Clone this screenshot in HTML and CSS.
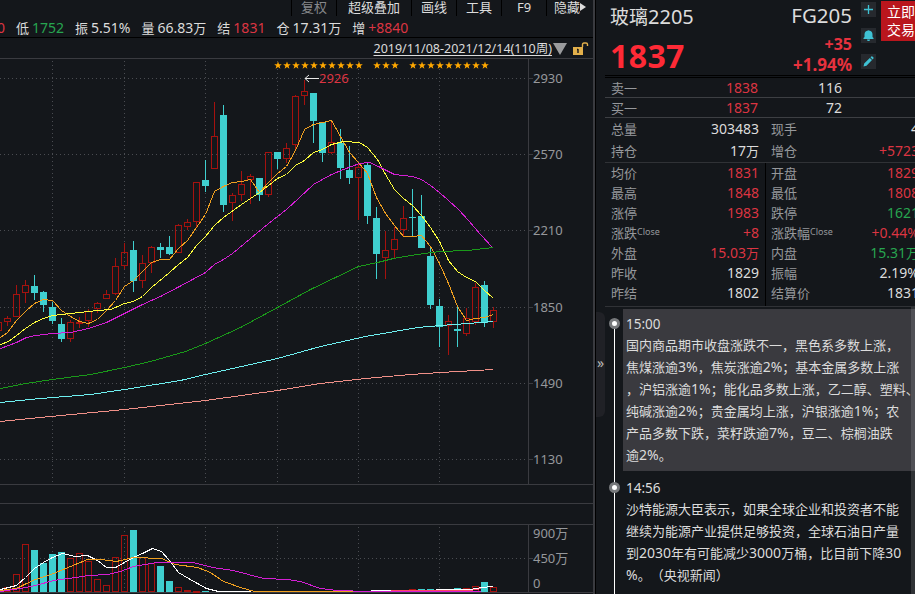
FILE: index.html
```html
<!DOCTYPE html>
<html lang="zh-CN">
<head>
  <meta charset="UTF-8">
  <title>玻璃2205 FG205</title>
  <link rel="stylesheet" href="styles.css">
</head>
<body>
  <div class="app">

    <!-- 左侧：K线区域 -->
    <div class="left">
      <div class="menu">
        <span class="dim w45">复权</span>
        <span class="w75">超级叠加</span>
        <span class="w45">画线</span>
        <span class="w45">工具</span>
        <span class="w45">F9</span>
        <span class="w47">隐藏<i class="arrow"></i></span>
      </div>

      <div class="info">
        <span><b class="red">0</b></span>
        <span>低<b class="green">1752</b></span>
        <span>振<b>5.51%</b></span>
        <span>量<b>66.83</b>万</span>
        <span>结<b class="red">1831</b></span>
        <span>仓<b>17.31</b>万</span>
        <span>增<b class="red">+8840</b></span>
      </div>

      <div class="range">
        <u>2019/11/08-2021/12/14(110周)</u>
        <i class="drop"></i>
        <svg class="lock" width="16" height="14" viewBox="0 0 16 14">
          <rect x="0" y="5" width="10" height="8" fill="#e3b04b"/>
          <path d="M9.5 5V2.5Q9.5 1 11 1H13Q14.5 1 14.5 2.5V4" fill="none" stroke="#e3b04b" stroke-width="1.4"/>
          <path d="M5 7V11M4 7.5H5" stroke="#14171b" stroke-width="1.4"/>
        </svg>
      </div>

      <svg id="chart" class="chart" width="593" height="536" viewBox="0 58 593 536"></svg>
    </div>

    <!-- 右侧：报价与资讯 -->
    <div class="right">
      <div class="gutter"><div class="fold">»</div></div>

      <div class="panel">
        <div class="head">
          <div class="title">
            <div class="name">玻璃<b>2205</b></div>
            <div class="price">1837</div>
          </div>
          <div class="change">
            <div class="code">FG205</div>
            <div class="diff">+35</div>
            <div class="pct">+1.94%</div>
          </div>
          <div class="tools">
            <svg width="15" height="15" viewBox="0 0 15 15"><path d="M7.5 3V12M3 7.5H12" stroke="#3fc1d3" stroke-width="1.3"/></svg>
            <svg width="15" height="15" viewBox="0 0 15 15"><path d="M2.5 11V10L3.5 9V6.5Q3.5 3 7 2.5Q7.5 1.8 8 2.5Q11.5 3 11.5 6.5V9L12.5 10V11ZM6 11.5H9L8.5 13H6.5Z" fill="#3fc1d3"/></svg>
            <svg width="15" height="15" viewBox="0 0 15 15"><path d="M2.5 12.5L3.2 9.5L8.8 3.9L11 6.1L5.5 11.7ZM9.5 3.2L10.3 2.5Q11 2 11.7 2.7L12.3 3.3Q12.9 4 12.3 4.7L11.6 5.4Z" fill="#3fc1d3"/></svg>
          </div>
          <div class="trade">立即<br>交易</div>
        </div>

        <div class="bid"><span>卖一</span><b class="red">1838</b><b>116</b></div>
        <div class="bid"><span>买一</span><b class="red">1837</b><b>72</b></div>

        <div class="totals">
          <div class="row"><span>总量</span><b>303483</b><span>现手</span><b>4</b></div>
          <div class="row"><span>持仓</span><b>17<em>万</em></b><span>增仓</span><b class="red">+5723</b></div>
        </div>

        <div class="quotes">
          <div class="row"><span>均价</span><b class="red">1831</b><span>开盘</span><b class="red">1829</b></div>
          <div class="row"><span>最高</span><b class="red">1848</b><span>最低</span><b class="red">1808</b></div>
          <div class="row"><span>涨停</span><b class="red">1983</b><span>跌停</span><b class="green">1621</b></div>
          <div class="row"><span>涨跌<small>Close</small></span><b class="red">+8</b><span>涨跌幅<small>Close</small></span><b class="red">+0.44%</b></div>
          <div class="row"><span>外盘</span><b class="red">15.03<em>万</em></b><span>内盘</span><b class="green">15.31<em>万</em></b></div>
          <div class="row"><span>昨收</span><b>1829</b><span>振幅</span><b>2.19%</b></div>
          <div class="row"><span>昨结</span><b>1802</b><span>结算价</span><b>1831</b></div>
        </div>

        <div class="news">
          <div class="item active">
            <i class="dot"></i>
            <div class="text">
              <div class="time">15:00</div>
              <p>国内商品期市收盘涨跌不一，黑色系多数上涨，</p>
              <p>焦煤涨逾<b>3%</b>，焦炭涨逾<b>2%</b>；基本金属多数上涨</p>
              <p>，沪铝涨逾<b>1%</b>；能化品多数上涨，乙二醇、塑料、</p>
              <p>纯碱涨逾<b>2%</b>；贵金属均上涨，沪银涨逾<b>1%</b>；农</p>
              <p>产品多数下跌，菜籽跌逾<b>7%</b>，豆二、棕榈油跌</p>
              <p>逾<b>2%</b>。</p>
            </div>
          </div>
          <div class="item">
            <i class="dot"></i>
            <div class="text">
              <div class="time">14:56</div>
              <p>沙特能源大臣表示，如果全球企业和投资者不能</p>
              <p>继续为能源产业提供足够投资，全球石油日产量</p>
              <p>到<b>2030</b>年有可能减少<b>3000</b>万桶，比目前下降<b>30</b></p>
              <p><b>%</b>。（央视新闻）</p>
            </div>
          </div>
          <div class="scroll"></div>
        </div>
      </div>
    </div>

  </div>
  <script src="chart.js"></script>
</body>
</html>
```
FILE: styles.css
```css
* {
  box-sizing: border-box;
}

body {
  margin: 0;
  background: #14171b;
  color: #dcdcdc;
  font-family: "Noto Sans", "Noto Sans CJK SC", sans-serif;
  font-size: 13px;
  text-spacing-trim: space-all;
  overflow: hidden;
}

b {
  font-weight: normal;
  font-size: 14px;
}

i, em {
  font-style: normal;
}

.red { color: #dc3542; }
.green { color: #27a550; }

.app {
  display: flex;
  width: 915px;
  height: 594px;
  overflow: hidden;
}

/* 左侧 */
.left {
  width: 595px;
  border-right: 2px solid #3a3b40;
  flex-shrink: 0;
}

.menu {
  display: flex;
  justify-content: flex-end;
  height: 16px;
}

.menu span {
  display: flex;
  align-items: center;
  justify-content: center;
  height: 16px;
  padding-bottom: 3px;
  line-height: 18px;
  border-left: 1px solid #000;
  white-space: nowrap;
}

.menu .dim { color: #86888b; }
.w45 { width: 45px; }
.w75 { width: 75px; }
.w47 { width: 47px; }

.arrow {
  border: 4px solid transparent;
  border-left: 6px solid #dcdcdc;
  border-right: 0;
}

.info {
  display: flex;
  align-items: center;
  gap: 11px;
  height: 22px;
  padding-top: 2px;
  margin-left: -3px;
  border-bottom: 1px solid #000;
}

.info span {
  display: flex;
  align-items: center;
  line-height: 18px;
  white-space: nowrap;
}

.info b { margin-left: 3px; }
.info span:first-child b { margin-left: 0; }

.range {
  display: flex;
  align-items: center;
  justify-content: flex-end;
  height: 20px;
  padding: 1px 4px 0 0;
}

.range u {
  font-size: 12.5px;
  line-height: 18px;
  text-underline-offset: 2px;
}

.drop {
  margin: 0 6px 0 1px;
  border: 7px solid transparent;
  border-top: 12px solid #9a9b9d;
  border-bottom: 0;
}

.chart {
  display: block;
}

.chart text {
  font-size: 13px;
  fill: #96989b;
}

.chart .high {
  fill: #dc3542;
}

/* 右侧 */
.right {
  display: flex;
  width: 320px;
  border-left: 1px solid #000;
}

.gutter {
  width: 9px;
  padding-top: 312px;
}

.fold {
  height: 105px;
  border-radius: 0 6px 6px 0;
  background: #202126;
  color: #b8b8b8;
  font-size: 14px;
  line-height: 102px;
  text-align: center;
}

.panel {
  width: 310px;
  overflow: hidden;
}

.head {
  display: flex;
  height: 78px;
  border-bottom: 3px double #000;
}

.title {
  width: 120px;
  padding: 4px 0 0 5px;
}

.name {
  font-size: 19px;
  line-height: 26px;
  white-space: nowrap;
}

.name b { font-size: 20px; }

.price {
  margin-top: 5px;
  color: #ff2a36;
  font-size: 32px;
  font-weight: bold;
  letter-spacing: 0.4px;
  line-height: 42px;
}

.change {
  width: 127px;
  padding-top: 2px;
  text-align: right;
  font-weight: bold;
  color: #e8323e;
  flex-shrink: 0;
}

.code {
  color: #dcdcdc;
  font-size: 20.5px;
  font-weight: normal;
  line-height: 26px;
}

.diff {
  margin-top: 6px;
  font-size: 16px;
  line-height: 21px;
}

.pct {
  font-size: 17px;
  line-height: 20px;
}

.title {
  flex-shrink: 0;
}

.tools {
  display: flex;
  flex-direction: column;
  gap: 11px;
  padding: 2px 0 0 9px;
  flex-shrink: 0;
}

.tools svg { background: #26292e; }

.trade {
  width: 40px;
  height: 40px;
  margin: 1px 0 0 5px;
  padding: 2px 0 0 6px;
  background: #b9161d;
  color: #fff;
  font-size: 14px;
  line-height: 18px;
  flex-shrink: 0;
}

.bid {
  display: flex;
  align-items: center;
  height: 20px;
  padding-left: 6px;
  border-bottom: 1px solid #3d3f43;
}

.bid span, .row span {
  color: #96989b;
  white-space: nowrap;
}

.bid span { width: 60px; }
.bid b { width: 87px; text-align: right; }
.bid b + b { width: 84px; }

.totals {
  border-bottom: 1px solid #303236;
}

.row {
  display: flex;
  align-items: center;
  width: 315px;
  height: 20px;
  padding-left: 6px;
  line-height: 20px;
}

.totals .row { height: 22px; }

.row span { width: 78px; flex-shrink: 0; }
.row b { width: 70px; text-align: right; white-space: nowrap; flex-shrink: 0; }
.row b + span { margin-left: 12px; }
.row b:last-child { width: 70px; }

.row em { font-size: 13px; }

.row small {
  font-size: 9px;
  vertical-align: 3px;
  line-height: 9px;
}

.quotes {
  height: 144px;
  border-bottom: 1px solid #303236;
  background: linear-gradient(#000, #000) 160px 0 / 1px 100% no-repeat;
}

/* 资讯时间轴 */
.news {
  position: relative;
  display: flex;
  flex-direction: column;
  gap: 2px;
  padding: 2px 0 0 18px;
  height: 300px;
}

.item {
  position: relative;
  padding: 5px 0 5px 3px;
}

.item.active { background: #3a3a3f; }

.item p {
  margin: 0;
  line-height: 22px;
  height: 22px;
  white-space: nowrap;
}

.time {
  font-size: 13.5px;
  line-height: 20px;
}

.item::before {
  content: "";
  position: absolute;
  left: -9px;
  top: 15px;
  width: 1px;
  height: 170px;
  background: #fff;
}

.dot {
  position: absolute;
  left: -14px;
  top: 9px;
  width: 11px;
  height: 11px;
  border: 3px solid #77797c;
  border-radius: 50%;
  background: #fff;
}

.scroll {
  position: absolute;
  right: 0;
  top: 0;
  width: 4px;
  height: 300px;
  background: rgba(255, 255, 255, 0.12);
}
```
FILE: chart.js
```js
const chart = document.getElementById('chart');
const RED = '#a5120f';
const CYAN = '#3fcfcf';
const LINE = '#3a3b40';
let out = '';

function line(x1, y1, x2, y2, color, extra) {
  out += `<path d="M${x1} ${y1}L${x2} ${y2}" stroke="${color}" fill="none" ${extra || ''}/>`;
}

function box(x, top, bottom, type) {
  if (type === 'c') {
    out += `<rect x="${x - 3}" y="${top}" width="7" height="${Math.max(bottom - top, 1)}" fill="${CYAN}"/>`;
  } else {
    out += `<rect x="${x - 2.5}" y="${top + 0.5}" width="6" height="${Math.max(bottom - top - 1, 1)}" fill="none" stroke="${RED}"/>`;
  }
}

function curve(points, color) {
  out += `<polyline points="${points}" fill="none" stroke="${color}" shape-rendering="crispEdges" transform="translate(0.5 0.5)"/>`;
}

// 网格
const dots = 'stroke-dasharray="1 3"';
[78, 154, 230, 307, 383, 459].forEach(y => {
  line(0, y + 0.5, 528, y + 0.5, '#4a4c51', dots);
  line(528, y + 0.5, 533, y + 0.5, LINE);
});
line(0, 558.5, 528, 558.5, '#4a4c51', dots);
line(528, 558.5, 533, 558.5, LINE);
[52, 124, 205, 277, 358, 439].forEach(x => {
  line(x + 0.5, 61, x + 0.5, 484, '#4a4c51', dots);
  line(x + 0.5, 527, x + 0.5, 592, '#4a4c51', dots);
});
[58, 484, 503, 524, 592].forEach(y => line(0, y + 0.5, 593, y + 0.5, LINE));
line(528.5, 58, 528.5, 484, LINE);
line(528.5, 524, 528.5, 592, LINE);

// 坐标文字
[[2930, 78], [2570, 154], [2210, 230], [1850, 307], [1490, 383], [1130, 459],
 ['900万', 533], ['450万', 558], [0, 583]].forEach(([t, y]) => {
  out += `<text x="533" y="${y + 5}">${t}</text>`;
});

// K线：[最高, 实体上沿, 实体下沿, 最低, 颜色]
const candles = [
  [322, 322, 331, 331, 'r'], [316, 318, 322, 326, 'r'], [285, 294, 317, 317, 'r'], [280, 285, 293, 303, 'r'],
  [275, 286, 293, 300, 'c'], [291, 292, 305, 312, 'c'], [302, 307, 321, 324, 'c'], [318, 324, 339, 342, 'c'],
  [320, 322, 339, 342, 'r'], [317, 322, 324, 328, 'r'], [309, 311, 321, 327, 'r'], [302, 303, 309, 313, 'r'],
  [290, 294, 299, 299, 'r'], [258, 266, 294, 295, 'r'], [243, 252, 266, 269, 'r'], [241, 250, 281, 292, 'c'],
  [255, 263, 281, 288, 'r'], [246, 247, 263, 273, 'r'], [243, 247, 250, 258, 'c'], [236, 247, 254, 255, 'c'],
  [224, 225, 253, 253, 'r'], [219, 222, 227, 230, 'r'], [182, 182, 222, 227, 'r'], [160, 180, 186, 192, 'c'],
  [102, 136, 169, 169, 'r'], [105, 115, 205, 212, 'c'], [193, 195, 203, 221, 'r'], [171, 184, 195, 201, 'r'],
  [174, 176, 180, 204, 'r'], [178, 178, 195, 201, 'c'], [152, 152, 195, 197, 'r'], [152, 152, 159, 169, 'c'],
  [143, 148, 159, 163, 'r'], [95, 96, 145, 150, 'r'], [80, 91, 96, 105, 'r'], [93, 93, 121, 143, 'c'],
  [122, 122, 153, 162, 'c'], [120, 142, 153, 154, 'r'], [129, 143, 168, 179, 'c'], [146, 170, 178, 184, 'c'],
  [163, 167, 178, 220, 'r'], [163, 165, 216, 224, 'c'], [207, 218, 254, 279, 'c'], [231, 250, 258, 279, 'r'],
  [227, 239, 250, 258, 'r'], [206, 218, 230, 237, 'r'], [189, 217, 218, 236, 'c'], [195, 216, 248, 248, 'c'],
  [247, 256, 305, 309, 'c'], [299, 306, 327, 347, 'c'], [315, 321, 326, 355, 'r'], [306, 329, 331, 347, 'c'],
  [308, 318, 334, 336, 'r'], [283, 287, 322, 325, 'r'], [281, 285, 323, 327, 'c'], [307, 310, 322, 328, 'r']
];
candles.forEach(([high, top, bottom, low, type], i) => {
  const x = i * 9 - 2;
  const color = type === 'c' ? CYAN : RED;
  if (high < top) line(x + 0.5, high, x + 0.5, top, color);
  if (low > bottom) line(x + 0.5, bottom, x + 0.5, low, color);
  box(x, top, bottom, type);
});

// 均线
curve('0,337 7,332 16,320 26,310 34,303 43,299 52,300 61,310 70,316 79,321 88,323 97,319 106,310 115,300 124,286 133,280 142,271 151,262 160,259 169,259 178,248 187,240 196,227 205,214 214,191 223,186 232,182 241,181 250,179 259,192 268,182 277,173 286,166 295,150 304,129 313,124 322,122 331,120 340,136 349,152 358,162 367,173 376,197 385,213 394,225 403,236 412,236 421,235 430,246 439,263 448,283 457,306 466,320 475,318 484,317 493,314', '#f0a020');
curve('0,344 8,341 16,335 25,328 34,322 43,318 52,315 61,314 79,312 97,310 110,309 115,307 124,303 133,301 142,296 151,287 169,272 178,264 187,257 196,245 205,236 214,225 223,217 241,204 259,192 277,178 286,174 295,165 304,160 313,152 322,149 331,144 343,141 359,142 367,147 377,159 385,174 394,189 403,198 412,205 421,215 430,227 439,241 448,260 457,271 466,277 475,281 484,290 493,298', '#ffff3c');
curve('0,348 16,342 26,337 35,335 52,333 70,332 88,328 106,322 124,313 142,304 160,296 179,286 205,272 214,264 223,259 232,253 250,238 268,223 286,209 298,198 313,184 331,174 343,169 359,163 369,162 378,166 394,174 412,176 421,179 430,185 439,192 448,200 458,209 468,220 480,234 492,247', '#d41fd4');
curve('0,388 25,383 52,379 90,374 124,367 150,361 185,351 205,343 240,327 277,307 310,289 358,266 377,262 393,258 417,254 439,251 467,250 493,247', '#1a991a');
curve('0,402 40,398 90,394 124,389 180,380 205,374 277,358 320,346 365,336 377,334 417,327 440,325 467,323 493,321', '#6ff0f0');
curve('0,421 50,416 124,409 205,400 277,390 320,383 365,378 410,374 440,372 493,369', '#f09088');

// 星标
for (let x = 278; x <= 485; x += 9) {
  if (x === 368 || x === 404) continue;
  out += `<path d="M${x} 61.5L${x + 1} 64.3H${x + 3.8}L${x + 1.6} 66L${x + 2.4} 68.8L${x} 67.1L${x - 2.4} 68.8L${x - 1.6} 66L${x - 3.8} 64.3H${x - 1}Z" fill="#ffa800"/>`;
}

// 最高价标记
out += '<path d="M319 78.5H305M309 75L305 78.5L309 82" stroke="#e8e8e8" fill="none"/>';
out += '<text class="high" x="319" y="83">2926</text>';

// 成交量：[x, 顶部, 颜色]
const volumes = [
  [7, 587, 'r'], [16, 574, 'r'], [25, 544, 'r'], [34, 550, 'c'], [43, 563, 'c'], [52, 554, 'c'], [61, 552, 'c'],
  [70, 558, 'r'], [79, 553, 'r'], [88, 561, 'r'], [97, 579, 'r'], [106, 585, 'r'], [115, 557, 'r'], [124, 535, 'r'],
  [133, 530, 'c'], [142, 557, 'r'], [151, 563, 'r'], [160, 566, 'c'], [169, 581, 'c'], [178, 587, 'r'], [187, 590, 'r'],
  [196, 591, 'r'], [205, 591, 'c'], [412, 589, 'r'], [421, 589, 'c'], [430, 589, 'c'], [457, 588, 'c'],
  [466, 588, 'r'], [475, 586, 'r'], [484, 582, 'c'], [493, 587, 'r']
];
volumes.forEach(([x, top, type]) => box(x, top, 592, type));

curve('0,589 8,587 16,585 25,577 34,568 43,562 52,557 62,553 75,556 87,555 97,560 106,567 115,567 124,562 133,557 142,553 152,548 161,551 169,560 178,572 188,578 197,583 206,588 218,591 250,591', '#ffffff');
curve('0,590 16,588 26,583 35,579 53,573 70,566 87,559 100,559 116,561 133,557 161,558 175,564 197,567 210,572 223,581 240,587 254,591 460,591', '#f0a020');
curve('0,591 20,588 35,585 53,580 75,577 88,575 107,574 120,571 133,566 157,562 193,562 212,567 233,570 263,578 287,579 300,581 320,588 337,590 367,591 480,591', '#d41fd4');
curve('370,590 390,590', '#ffffff');
curve('390,590 434,590 470,590 481,588', '#ff4466');
curve('435,589 470,589 481,587 493,586', '#ffffff');

chart.innerHTML = out;
```
